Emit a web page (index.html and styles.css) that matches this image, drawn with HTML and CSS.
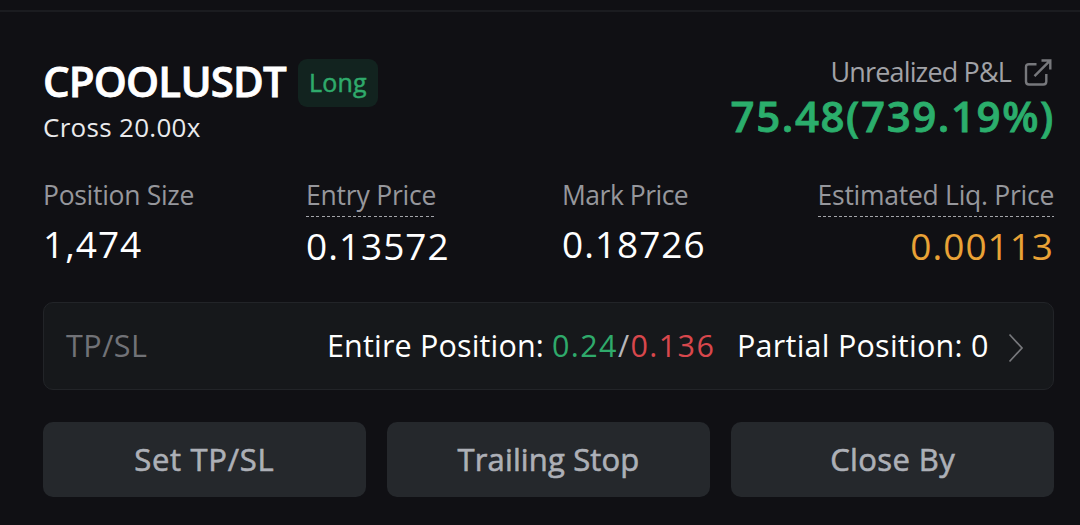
FILE: index.html
```html
<!DOCTYPE html>
<html lang="en">
<head>
<meta charset="utf-8">
<title>CPOOLUSDT Position</title>
<link rel="stylesheet" href="styles.css">
</head>
<body>
<main class="position">
  <header class="summary">
    <div class="contract">
      <div class="contract-line">
        <h1 class="symbol">CPOOLUSDT</h1>
        <span class="side">Long</span>
      </div>
      <div class="margin-mode">Cross 20.00x</div>
    </div>
    <div class="pnl">
      <div class="pnl-line">
        <span class="pnl-label">Unrealized P&amp;L</span>
        <svg class="share" viewBox="0 0 28 28" fill="none" stroke="#77787c" stroke-width="2.4">
          <path d="M12.5 5.2H5Q2 5.2 2 8.2V22.5Q2 25.5 5 25.5H19.3Q22.3 25.5 22.3 22.5V15"/>
          <path d="M10.5 17.2 26 1.7M17.5 1.5H26.3V10.5"/>
        </svg>
      </div>
      <div class="pnl-value">75.48(739.19%)</div>
    </div>
  </header>

  <section class="stats">
    <div class="stat">
      <span class="label l-size">Position Size</span>
      <span class="value">1,474</span>
    </div>
    <div class="stat">
      <span class="label hint l-entry">Entry Price</span>
      <span class="value">0.13572</span>
    </div>
    <div class="stat">
      <span class="label l-mark">Mark Price</span>
      <span class="value">0.18726</span>
    </div>
    <div class="stat end">
      <span class="label hint l-liq">Estimated Liq. Price</span>
      <span class="value warn">0.00113</span>
    </div>
  </section>

  <section class="tpsl">
    <span class="tpsl-name">TP/SL</span>
    <span class="entire">Entire Position:</span>
    <span class="targets"><span class="tp">0.24</span><span class="slash">/</span><span class="sl">0.136</span></span>
    <span class="partial">Partial Position: 0</span>
    <svg class="chevron" viewBox="0 0 16 30" fill="none" stroke="#77787c" stroke-width="1.7"><path d="M1.5 1.5 14 15 1.5 28.5"/></svg>
  </section>

  <nav class="actions">
    <button class="action b-set">Set TP/SL</button>
    <button class="action b-trail">Trailing Stop</button>
    <button class="action b-close">Close By</button>
  </nav>
</main>
</body>
</html>
```
FILE: styles.css
```css
* { box-sizing: border-box; }
body {
  margin: 0;
  background: #101014;
  color: #fff;
  font-family: "Open Sans", "Noto Sans", sans-serif;
  white-space: nowrap;
}
.position {
  height: 525px;
  padding: 10px 26px 0 43px;
  background: linear-gradient(#1b1c20, #1b1c20) 0 10px / 100% 2px no-repeat;
}
.summary { display: flex; justify-content: space-between; padding-top: 48px; height: 162px; }
.contract-line { display: flex; align-items: center; gap: 12px; height: 49px; }
.symbol {
  margin: 0; width: 243px; padding-bottom: 3px;
  font-size: 42px; line-height: 46px; font-weight: 600; letter-spacing: -0.8px;
  -webkit-text-stroke: 0.8px currentColor;
}
.side {
  width: 80px; height: 48px; border-radius: 9px; background: #12231f; color: #2faa6b;
  font-size: 25px; line-height: 46px; text-align: center; letter-spacing: 0.2px;
  -webkit-text-stroke: 0.5px currentColor;
}
.margin-mode { margin-top: 5px; font-size: 26px; line-height: 31px; letter-spacing: 0.3px; color: #eaeaec; }
.pnl { display: flex; flex-direction: column; align-items: flex-end; }
.pnl-line { display: flex; gap: 13px; height: 30px; padding-right: 2px; }
.pnl-label { font-size: 27px; line-height: 27px; letter-spacing: -0.85px; color: #a1a2a7; }
.share { width: 28px; height: 28px; margin-top: 1px; }
.pnl-value {
  margin-right: -1px; padding-top: 4px;
  font-size: 42px; line-height: 48px; font-weight: 600; letter-spacing: 1.6px; color: #2bae6c;
  -webkit-text-stroke: 0.8px currentColor;
}
.stats { display: grid; grid-template-columns: 263px 256px 200px 1fr; height: 130px; padding-top: 8px; }
.stat { display: flex; flex-direction: column; align-items: flex-start; }
.end { align-items: flex-end; }
.label { height: 35px; font-size: 26.5px; line-height: 31px; color: #96979c; }
.l-size { letter-spacing: -0.3px; }
.l-entry { letter-spacing: -0.2px; }
.l-mark { letter-spacing: -0.5px; }
.l-liq { letter-spacing: -0.27px; }
.hint {
  height: 37px;
  background: repeating-linear-gradient(90deg, #a4a5aa 0 3px, transparent 3px 5.2px) 0 35.5px / 100% 1.5px no-repeat;
}
.value { margin-top: 7px; font-size: 37px; line-height: 44px; letter-spacing: 1px; }
.warn { color: #e9a236; }
.tpsl {
  display: flex; align-items: center; height: 88px; padding: 0 29px 2px 22px;
  border: 1.5px solid #222428; border-radius: 10px; background: #16181b; font-size: 30.5px;
}
.tpsl-name { width: 261px; letter-spacing: 0.5px; color: #717277; }
.entire { width: 225px; letter-spacing: 0.17px; }
.targets { width: 185px; letter-spacing: 1.4px; }
.tp { color: #2faa6b; }
.slash { color: #b5b6ba; }
.sl { color: #d8474c; }
.partial { flex: 1; letter-spacing: 0.25px; }
.chevron { width: 16px; height: 30px; margin-top: 5px; }
.actions { display: grid; grid-template-columns: repeat(3, 1fr); gap: 21.5px; padding-top: 32px; }
.action {
  height: 75px; padding: 0 0 2px; border: 0; border-radius: 10px; background: #25282c; color: #adb0b7;
  font: 31px "Open Sans", "Noto Sans", sans-serif;
  -webkit-text-stroke: 0.6px currentColor;
}
.b-set { letter-spacing: 0.7px; }
.b-trail { letter-spacing: 0.15px; }
.b-close { letter-spacing: 0.4px; }
```
